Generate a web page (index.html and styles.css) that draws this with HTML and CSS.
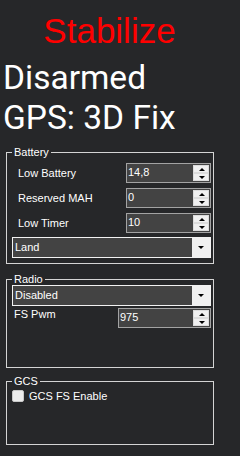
FILE: index.html
```html
<!DOCTYPE html>
<html lang="en">
<head>
  <meta charset="UTF-8">
  <title>Failsafe</title>
  <link rel="stylesheet" href="styles.css">
</head>
<body>

<div class="panel">
  <div class="mode">Stabilize</div>
  <div class="status">Disarmed</div>
  <div class="status">GPS: 3D Fix</div>

  <fieldset class="group battery">
    <legend>Battery</legend>
    <div class="row">
      <label>Low Battery</label>
      <div class="spin">
        <span class="val">14,8</span>
        <div class="arrows"><span class="up"></span><span class="down"></span></div>
      </div>
    </div>
    <div class="row">
      <label>Reserved MAH</label>
      <div class="spin">
        <span class="val">0</span>
        <div class="arrows"><span class="up"></span><span class="down"></span></div>
      </div>
    </div>
    <div class="row">
      <label>Low Timer</label>
      <div class="spin">
        <span class="val">10</span>
        <div class="arrows"><span class="up"></span><span class="down"></span></div>
      </div>
    </div>
    <div class="combo">
      <span class="val">Land</span>
      <span class="drop"></span>
    </div>
  </fieldset>

  <fieldset class="group radio">
    <legend>Radio</legend>
    <div class="combo">
      <span class="val">Disabled</span>
      <span class="drop"></span>
    </div>
    <div class="row pwm">
      <label>FS Pwm</label>
      <div class="spin">
        <span class="val">975</span>
        <div class="arrows"><span class="up"></span><span class="down"></span></div>
      </div>
    </div>
  </fieldset>

  <fieldset class="group gcs">
    <legend>GCS</legend>
    <label class="check"><span class="box"></span>GCS FS Enable</label>
  </fieldset>
</div>

</body>
</html>
```

FILE: styles.css
```css
* { box-sizing: border-box; }
body {
  margin: 0;
  background: #262729;
  color: #fff;
  font-family: "Liberation Sans", Arial, sans-serif;
  font-size: 11px;
}

.panel { width: 219px; }

.mode {
  color: #ff0000;
  font-size: 35px;
  line-height: 40px;
  text-align: center;
  padding-top: 11px;
}

.status {
  font-family: Roboto, sans-serif;
  font-size: 33.5px;
  line-height: 40px;
  padding-left: 3px;
}
.mode + .status { margin-top: 7px; }

.group {
  width: 208px;
  margin: 0 0 0 6px;
  padding: 0 2px 0 5px;
  border: 1px solid #d4d4d4;
  min-width: 0;
}
.group legend {
  padding: 0 2px;
  line-height: 13px;
  margin-left: 0;
}

.battery { margin-top: 8px; padding-bottom: 5px; }
.radio { margin-top: 9px; padding-bottom: 39px; }
.gcs { margin-top: 7px; padding-bottom: 42px; }

.row {
  display: flex;
  align-items: center;
  height: 20px;
  margin-top: 5px;
}
.battery .row:first-of-type { margin-top: 4px; }
.row label { padding-left: 6px; }

.spin {
  margin-left: auto;
  width: 85px;
  height: 20px;
  display: flex;
  border: 1px solid #a3a3a3;
  background: #434343;
}
.spin .val {
  flex: 1;
  line-height: 17px;
  padding-left: 1px;
}
.arrows {
  width: 17px;
  display: flex;
  flex-direction: column;
  padding: 1px 1px 1px 0;
}
.arrows span {
  flex: 1;
  background: #f0f0f0;
  border: 1px solid #dcdcdc;
  position: relative;
}
.arrows span::after {
  content: "";
  position: absolute;
  left: 5px;
  top: 2px;
  border-left: 3px solid transparent;
  border-right: 3px solid transparent;
}
.arrows .up::after { border-bottom: 3px solid #000; }
.arrows .down::after { border-top: 3px solid #000; }

.combo {
  display: flex;
  height: 21px;
  margin-top: 4px;
  border: 1px solid #f2f2f2;
  background: #434343;
}
.combo .val {
  flex: 1;
  line-height: 19px;
  padding-left: 2px;
}
.combo .drop {
  width: 18px;
  background: #f0f0f0;
  position: relative;
}
.combo .drop::after {
  content: "";
  position: absolute;
  left: 6px;
  top: 8px;
  border-left: 3px solid transparent;
  border-right: 3px solid transparent;
  border-top: 3px solid #000;
}

.radio .combo { margin-top: -1px; }

.row.pwm {
  align-items: flex-start;
  margin-top: 2px;
  height: 20px;
}
.row.pwm label { padding-left: 2px; padding-top: 0; }
.row.pwm .spin { width: 93px; }

.check {
  display: flex;
  align-items: center;
  gap: 5px;
  margin-top: 2px;
}
.check .box {
  width: 12px;
  height: 12px;
  border-radius: 2px;
  background: #ececec;
  border: 1px solid #c8c8c8;
}
```
